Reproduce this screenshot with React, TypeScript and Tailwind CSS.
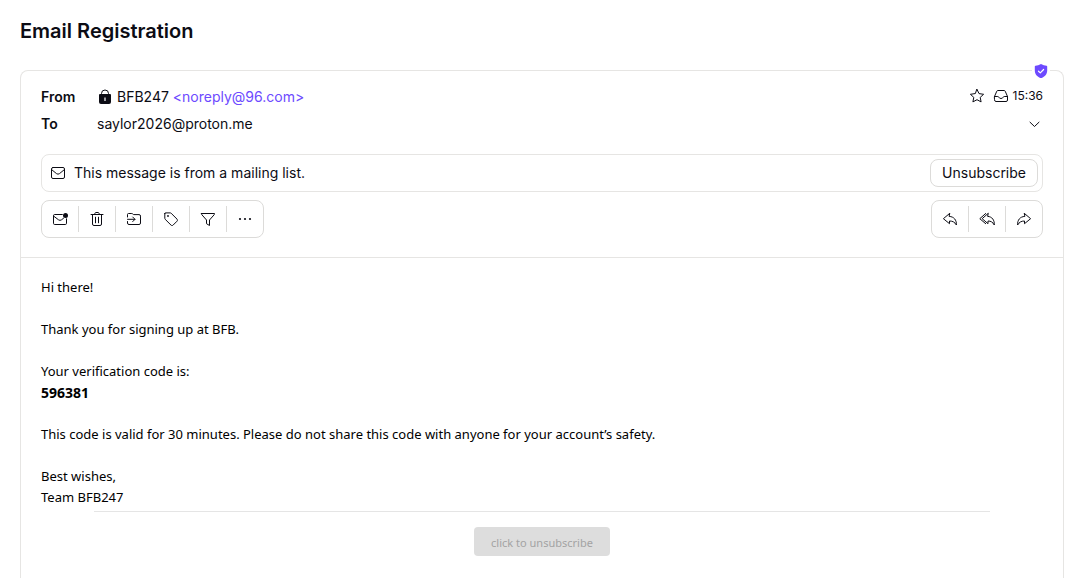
import type { ReactNode } from "react";

function Icon({ children, className = "size-4" }: { children: ReactNode; className?: string }) {
  return (
    <svg
      viewBox="0 0 16 16"
      className={`shrink-0 ${className}`}
      fill="none"
      stroke="currentColor"
      strokeWidth="1"
      strokeLinecap="round"
      strokeLinejoin="round"
      aria-hidden="true"
    >
      {children}
    </svg>
  );
}

const Lock = () => (
  <Icon>
    <path d="M4.500 6V4.500a3.500 3.500 0 0 1 7 0V6" />
    <path
      d="M3 5h10a1 1 0 0 1 1 1v7a2 2 0 0 1-2 2H4a2 2 0 0 1-2-2V6a1 1 0 0 1 1-1z"
      fill="currentColor"
      stroke="none"
    />
    <path d="M8 8.500v3.500" stroke="#fff" strokeWidth="1.2" strokeLinecap="butt" />
  </Icon>
);

const Star = () => (
  <Icon>
    <path d="M8 1.400l2 4.200 4.600.700-3.400 3.100.9 4.500L8 11.700 3.900 13.900l.9-4.500L1.400 6.300l4.600-.7z" />
  </Icon>
);

const Inbox = () => (
  <Icon>
    <path d="M1.500 8.500l2.300-5.300A1.200 1.200 0 0 1 4.900 2.500h6.200a1.200 1.200 0 0 1 1.100.7l2.300 5.300v3.500a1.500 1.500 0 0 1-1.500 1.500H3A1.500 1.500 0 0 1 1.500 12z" />
    <path d="M1.500 8.500h3.300c.5 0 .8.300 1 .7.500 1.700 3.900 1.700 4.400 0 .2-.4.500-.7 1-.7h3.300" />
  </Icon>
);

const Chevron = () => (
  <Icon>
    <path d="M3 6.200L7.500 10.500 12 6.200" />
  </Icon>
);

const Envelope = () => (
  <Icon>
    <rect x="1.500" y="2.500" width="13" height="11" rx="1.500" />
    <path d="M1.500 4.500l5 4.100a2.400 2.400 0 0 0 3 0l5-4.100" />
  </Icon>
);

const EnvelopeDot = () => (
  <Icon>
    <path d="M10.300 3.500H2.700A1.200 1.200 0 0 0 1.500 4.700v7.600a1.200 1.200 0 0 0 1.200 1.200h10.600a1.200 1.200 0 0 0 1.200-1.200V7.800" />
    <path d="M1.500 5l5 3.800a2.400 2.400 0 0 0 3 0l2-1.500" />
    <circle cx="13.500" cy="4.500" r="2.500" fill="currentColor" stroke="none" />
  </Icon>
);

const Trash = () => (
  <Icon>
    <path d="M2 3.500h12M5.500 3.500l.5-1.300a1 1 0 0 1 .9-.7h2.200a1 1 0 0 1 .9.700l.5 1.300" />
    <path d="M3.500 3.500v9.500a1.500 1.500 0 0 0 1.500 1.500h6a1.500 1.500 0 0 0 1.500-1.500V3.500M6.500 6.200v5.600M9.500 6.200v5.600" />
  </Icon>
);

const MoveTo = () => (
  <Icon>
    <path d="M1.500 6V3.500a1 1 0 0 1 1-1h3.300a1 1 0 0 1 .6.200l1.200.9h5.400a1.500 1.500 0 0 1 1.500 1.500V12a1.500 1.500 0 0 1-1.500 1.500H3A1.500 1.500 0 0 1 1.500 12v-1.500" />
    <path d="M1.500 8.300h7.300M6.700 6l2.300 2.300-2.300 2.300" />
  </Icon>
);

const Tag = () => (
  <Icon>
    <path d="M1.800 2.600v4.600c0 .4.200.8.400 1.100l5.800 5.800c.6.600 1.500.600 2.100 0l3.900-3.900c.6-.6.600-1.500 0-2.100L8.200 2.300c-.3-.3-.7-.4-1.100-.4H2.500a.7.700 0 0 0-.7.700z" />
    <circle cx="5" cy="5" r=".9" fill="currentColor" stroke="none" />
  </Icon>
);

const Filter = () => (
  <Icon>
    <path d="M1.500 2.500h13c0 .6-.1 1-.5 1.400L9.500 9v5.500l-3-1.800V9L2 3.900c-.4-.4-.5-.8-.5-1.400z" />
  </Icon>
);

const More = () => (
  <Icon>
    <g fill="currentColor" stroke="none">
      <circle cx="3" cy="8" r="1.100" />
      <circle cx="8" cy="8" r="1.100" />
      <circle cx="13" cy="8" r="1.100" />
    </g>
  </Icon>
);

const Reply = () => (
  <Icon>
    <path d="M7.500 2.500L1.400 7.700l6.100 5v-2.700c3 0 5.200 1 6.900 4 .2-5-2.300-8.300-6.900-8.600z" />
  </Icon>
);

const ReplyAll = () => (
  <Icon>
    <path d="M9 2.500L3.200 7.700 9 12.700v-2.700c2.800 0 4.700 1 6.300 4 .2-5-2.100-8.300-6.300-8.600z" />
    <path d="M6.700 2.500L.8 7.700l5.900 5" />
  </Icon>
);

const Forward = () => (
  <Icon>
    <path d="M8.500 2.500l6.100 5.200-6.100 5v-2.700c-3 0-5.200 1-6.900 4-.2-5 2.300-8.300 6.900-8.600z" />
  </Icon>
);

const Shield = () => (
  <svg viewBox="0 0 16 16" className="size-4" aria-hidden="true">
    <path
      d="M8 1c1.800 1 3.700 1.500 5.500 1.700.4 0 .7.400.7.800v4c0 3.700-2.500 6.300-5.600 7.400-.4.200-.8.200-1.200 0C4.300 13.800 1.800 11.200 1.800 7.500v-4c0-.4.300-.8.700-.8C4.300 2.500 6.200 2 8 1z"
      fill="#6d4aff"
    />
    <path d="M5.500 8.200l1.800 1.700 3.300-3.400" fill="none" stroke="#fff" strokeWidth="1.200" strokeLinecap="round" strokeLinejoin="round" />
  </svg>
);

type Action = { label: string; icon: ReactNode };

const organise: Action[] = [
  { label: "Mark as unread", icon: <EnvelopeDot /> },
  { label: "Move to trash", icon: <Trash /> },
  { label: "Move to", icon: <MoveTo /> },
  { label: "Label as", icon: <Tag /> },
  { label: "Filter on", icon: <Filter /> },
  { label: "More", icon: <More /> },
];

const respond: Action[] = [
  { label: "Reply", icon: <Reply /> },
  { label: "Reply all", icon: <ReplyAll /> },
  { label: "Forward", icon: <Forward /> },
];

function ButtonGroup({ actions }: { actions: Action[] }) {
  return (
    <div className="flex items-center divide-x divide-[#dcdbd9] rounded-lg border border-[#dcdbd9] py-[5px]">
      {actions.map((action) => (
        <button key={action.label} type="button" aria-label={action.label} className="box-content flex h-[26px] w-9 items-center justify-center">
          {action.icon}
        </button>
      ))}
    </div>
  );
}

export default function App() {
  return (
    <main className="flex min-h-screen flex-col bg-white pr-[18px] pl-5 font-['Inter',sans-serif] text-sm text-[#0c0c14]">
      <h1 className="pt-4 text-xl leading-[30px] font-semibold">Email Registration</h1>

      <article className="relative mt-6 flex flex-1 flex-col rounded-t-lg border border-b-0 border-[#e6e5e3]">
        <span className="absolute -top-2 right-[13px] bg-white px-px" role="img" aria-label="Verified sender">
          <Shield />
        </span>

        <header className="border-b border-[#e6e5e3] px-5 pt-4 pb-[19px]">
          <div className="flex items-start justify-between">
            <div className="flex items-center">
              <span className="w-14 font-semibold">From</span>
              <Lock />
              <span className="ml-1">
                BFB247{" "}
                <a href="mailto:noreply@96.com" className="text-[#6d4aff]">
                  &lt;noreply@96.com&gt;
                </a>
              </span>
            </div>
            <div className="flex items-center">
              <button type="button" aria-label="Star message" className="mr-2">
                <Star />
              </button>
              <Inbox />
              <time className="ml-1 text-xs leading-[18px]">15:36</time>
            </div>
          </div>

          <div className="mt-[7px] flex items-center justify-between">
            <div className="flex items-center">
              <span className="w-14 font-semibold">To</span>
              <span>saylor2026@proton.me</span>
            </div>
            <button type="button" aria-label="Show details">
              <Chevron />
            </button>
          </div>

          <div className="mt-5 flex items-center justify-between rounded-lg border border-[#e6e5e3] py-1 pr-1 pl-2">
            <div className="flex items-center gap-2">
              <Envelope />
              <span>This message is from a mailing list.</span>
            </div>
            <button type="button" className="rounded-lg border border-[#dcdbd9] px-[11px] py-[3px] leading-5">
              Unsubscribe
            </button>
          </div>

          <div className="mt-2 flex items-center justify-between">
            <ButtonGroup actions={organise} />
            <ButtonGroup actions={respond} />
          </div>
        </header>

        <div className="px-5 pt-[19px] font-['Noto_Sans',sans-serif] text-[13px] leading-[21px] text-black">
          <p>Hi there!</p>
          <p className="mt-[21px]">Thank you for signing up at BFB.</p>
          <p className="mt-[21px]">
            Your verification code is:
            <strong className="block text-sm leading-[21px] font-bold">596381</strong>
          </p>
          <p className="mt-[21px]">
            This code is valid for 30 minutes. Please do not share this code with anyone for your account’s safety.
          </p>
          <p className="mt-[21px]">
            Best wishes,
            <br />
            Team BFB247
          </p>
          <hr className="mx-auto mt-[3px] w-[896px] max-w-full border-[#e5e5e5]" />
          <div className="mt-[15px] flex justify-center">
            <a href="#unsubscribe" className="rounded bg-[#dddddd] px-[17px] pt-[7px] pb-1 text-[11px] leading-[18px] text-[#a3a3a3]">
              click to unsubscribe
            </a>
          </div>
        </div>
      </article>
    </main>
  );
}
